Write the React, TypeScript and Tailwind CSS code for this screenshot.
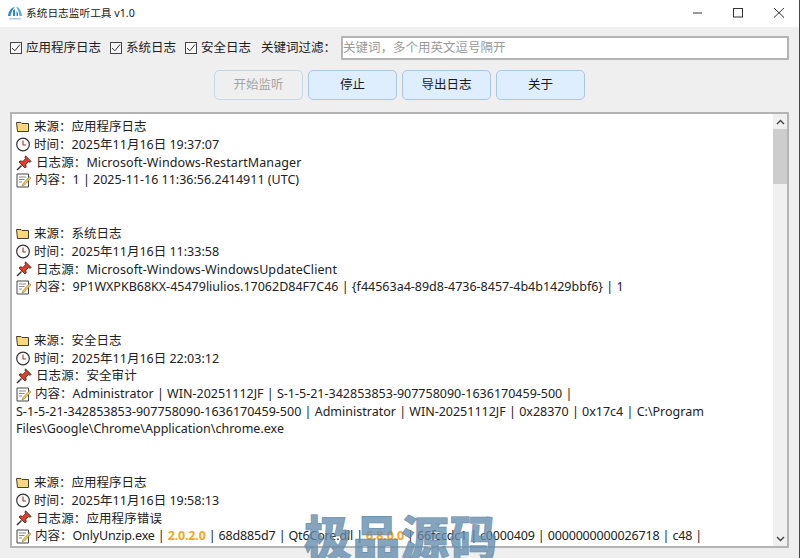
import type { ReactNode } from 'react'

const font = { fontFamily: '"Noto Sans", "Noto Sans CJK SC", sans-serif' }

function AppIcon() {
  return (
    <svg width="16" height="17" viewBox="0 0 16 17" className="shrink-0">
      <path d="M1 11 C1.5 6 4 3 8 1.5 C5.5 4.5 3.8 8 3.6 11 Z" fill="#2b86d6" />
      <path d="M6 5.5 L8 4 L8 11 L6 11 Z" fill="#2b86d6" />
      <path d="M9 1.5 C12.5 2.5 14.5 6.5 15 11 L12.4 11 C12.2 7.5 11 4.5 9 1.5 Z" fill="#56ade8" />
      <path d="M9.5 6 L11 8 L11 11 L9.5 11 Z" fill="#2b86d6" />
      <rect x="2" y="13" width="12" height="1.5" fill="#a9cde8" />
    </svg>
  )
}

function FolderIcon() {
  return (
    <svg width="14" height="12" viewBox="0 0 14 12" className="shrink-0">
      <path d="M0.5 1.5 H5 L6 2.5 H12.5 V10.5 H1.5 Z" fill="#fbd67a" stroke="#3f3f36" strokeWidth="1" />
    </svg>
  )
}

function ClockIcon() {
  return (
    <svg width="14" height="15" viewBox="0 0 14 15" className="shrink-0">
      <circle cx="7" cy="7.5" r="6.3" fill="#fff" stroke="#333" strokeWidth="1.2" />
      <path d="M7 3.5 V8 H10" fill="none" stroke="#a8322a" strokeWidth="1.1" />
    </svg>
  )
}

function PinIcon() {
  return (
    <svg width="16" height="16" viewBox="0 0 16 16" className="shrink-0">
      <path d="M9.5 0.8 L15.2 6.5 L13.8 7.2 L12.4 6.6 L9.8 9.4 L10.2 12 L9 13 L3 7 L4.2 5.8 L6.8 6.4 L9.6 3.6 L9 2.2 Z" fill="#e23d25" stroke="#3a2420" strokeWidth="0.8" />
      <path d="M5.5 10.5 L1 15" stroke="#333" strokeWidth="1.5" />
    </svg>
  )
}

function MemoIcon() {
  return (
    <svg width="15" height="15" viewBox="0 0 15 15" className="shrink-0">
      <path d="M1 1 H12.5 V14 H1 Z" fill="#fff" stroke="#444" strokeWidth="1" />
      <path d="M3 4 H10 M3 6.5 H8.5 M3 9 H6" stroke="#8a8a8a" strokeWidth="1" />
      <path d="M13.5 3.5 L7 10.5 L6 13 L8.5 12 L15 5 Z" fill="#f3c64a" stroke="#7a6a3a" strokeWidth="0.5" />
    </svg>
  )
}

function Check({ label, className }: { label: string; className?: string }) {
  return (
    <label className={`flex items-center gap-[4px] ${className ?? ''}`}>
      <span className="flex h-[12px] w-[12px] items-center justify-center border border-[#444] bg-[#f7f7f7]">
        <svg width="10" height="10" viewBox="0 0 10 10">
          <path d="M1 5 L3.8 7.8 L9 1.5" fill="none" stroke="#333" strokeWidth="1" />
        </svg>
      </span>
      <span>{label}</span>
    </label>
  )
}

function Button({ label, disabled }: { label: string; disabled?: boolean }) {
  return (
    <button
      className={
        disabled
          ? 'h-[30px] w-[89px] rounded-[5px] border border-[#c6d6e4] bg-[#efefef] text-[#a5a5a5]'
          : 'h-[30px] w-[89px] rounded-[5px] border border-[#a9c8e6] bg-[#deeeff] text-[#1a1a1a]'
      }
    >
      {label}
    </button>
  )
}

function Entry({ source, time, origin, children }: { source: string; time: string; origin: string; children: ReactNode }) {
  return (
    <div className="mb-[36px] leading-[17.7px]">
      <div className="flex items-center gap-[4px]"><FolderIcon /><span>来源：{source}</span></div>
      <div className="flex items-center gap-[4px]"><ClockIcon /><span>时间：{time}</span></div>
      <div className="flex items-center gap-[4px]"><PinIcon /><span className="tracking-[0.1px]">日志源：{origin}</span></div>
      <div className="relative indent-[19px]">
        <span className="absolute top-[2px] left-0"><MemoIcon /></span>
        内容：{children}
      </div>
    </div>
  )
}

export default function App() {
  return (
    <div style={font} className="relative flex h-[558px] w-[800px] flex-col overflow-hidden border-r border-[#34495e] bg-[#efefef] text-[12.5px] text-[#222]">
      <div className="flex h-[27px] shrink-0 items-center bg-white pb-[1px] pl-[7px] text-[10.7px]">
        <AppIcon />
        <span className="ml-[3px]">系统日志监听工具 v1.0</span>
        <div className="ml-auto flex items-center">
          <svg width="40" height="27" viewBox="0 0 40 27"><path d="M14 13 H23" stroke="#333" /></svg>
          <svg width="40" height="27" viewBox="0 0 40 27"><rect x="14.5" y="8.5" width="9" height="8.5" fill="none" stroke="#333" /></svg>
          <svg width="40" height="27" viewBox="0 0 40 27"><path d="M15 8 L25 17.5 M25 8 L15 17.5" stroke="#333" /></svg>
        </div>
      </div>

      <div className="flex shrink-0 items-center pt-[9px] pl-[10px] pr-[10px]">
        <Check label="应用程序日志" />
        <Check label="系统日志" className="ml-[9px]" />
        <Check label="安全日志" className="ml-[9px]" />
        <span className="ml-[10px]">关键词过滤：</span>
        <div className="ml-[5px] flex h-[24px] flex-1 items-center border-2 border-[#b4b4b4] bg-white text-[#9a9a9a]">
          关键词，多个用英文逗号隔开
        </div>
      </div>

      <div className="flex shrink-0 justify-center gap-[5px] pt-[10px] pb-[12px]">
        <Button label="开始监听" disabled />
        <Button label="停止" />
        <Button label="导出日志" />
        <Button label="关于" />
      </div>

      <div className="mx-[10px] flex h-[436px] shrink-0 overflow-hidden border-2 border-[#b4b4b4] bg-white">
        <div className="flex-1 overflow-hidden pt-[4.3px] pl-[4px]">
          <Entry source="应用程序日志" time="2025年11月16日 19:37:07" origin="Microsoft-Windows-RestartManager">
            1 | 2025-11-16 11:36:56.2414911 (UTC)
          </Entry>
          <Entry source="系统日志" time="2025年11月16日 11:33:58" origin="Microsoft-Windows-WindowsUpdateClient">
            9P1WXPKB68KX-45479liulios.17062D84F7C46 | {'{f44563a4-89d8-4736-8457-4b4b1429bbf6}'} | 1
          </Entry>
          <Entry source="安全日志" time="2025年11月16日 22:03:12" origin="安全审计">
            Administrator | WIN-20251112JF | S-1-5-21-342853853-907758090-1636170459-500 |<br />
            S-1-5-21-342853853-907758090-1636170459-500 | Administrator | WIN-20251112JF | 0x28370 | 0x17c4 | C:\Program<br />
            Files\Google\Chrome\Application\chrome.exe
          </Entry>
          <Entry source="应用程序日志" time="2025年11月16日 19:58:13" origin="应用程序错误">
            <span className="tracking-[-0.16px]">
              OnlyUnzip.exe | <b className="text-[#f5a623]">2.0.2.0</b> | 68d885d7 | Qt6Core.dll | <b className="text-[#f5a623]">6.8.0.0</b> | 66fccdc1 | c0000409 | 0000000000026718 | c48 |<br />
              01dc56c6c1da17f | C:\Users\Administrator\AppData\Local\Temp\OnlyUnzip.exe
            </span>
          </Entry>
        </div>
        <div className="flex w-[14px] shrink-0 flex-col bg-[#f0f0f0]">
          <div className="flex h-[15px] items-center justify-center">
            <svg width="9" height="6" viewBox="0 0 9 6"><path d="M1 5 L4.5 1.5 L8 5" fill="none" stroke="#444" strokeWidth="1.4" /></svg>
          </div>
          <div className="h-[55px] bg-[#cdcdcd]" />
          <div className="flex-1" />
          <div className="flex h-[15px] items-center justify-center">
            <svg width="9" height="6" viewBox="0 0 9 6"><path d="M1 1 L4.5 4.5 L8 1" fill="none" stroke="#444" strokeWidth="1.4" /></svg>
          </div>
        </div>
      </div>

      <div className="absolute top-[507px] left-[304px] text-[48px] leading-[56px] font-black tracking-[0.5px] text-[#648cad]/80 [-webkit-text-stroke:0.6px_#648cad]" style={{ fontFamily: '"Noto Sans CJK SC", sans-serif' }}>
        极品源码
      </div>
    </div>
  )
}
